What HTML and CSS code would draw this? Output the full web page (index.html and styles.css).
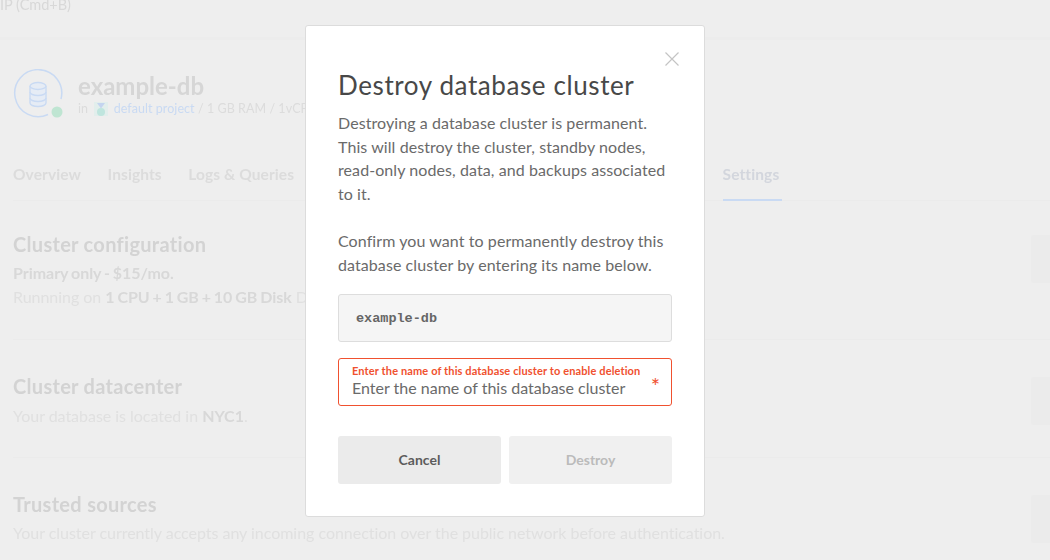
FILE: index.html
```html
<!DOCTYPE html>
<html lang="en">
<head>
<meta charset="utf-8">
<title>Destroy database cluster</title>
<link rel="stylesheet" href="styles.css">
</head>
<body>
<div class="page">
  <div class="hint">IP (Cmd+B)</div>
  <header class="head">
    <div class="db-icon">
      <svg width="50" height="50" viewBox="0 0 50 50" fill="none">
        <path d="M35 45.500A23.500 23.500 0 1 1 48 30" stroke="#c9daf3" stroke-width="1.500"/>
        <g stroke="#c9daf3" stroke-width="1.400" fill="#e6ecf5">
          <path d="M17 17v17c0 2 3.500 3.500 8 3.500s8-1.500 8-3.500V17"/>
          <ellipse cx="25" cy="17" rx="8" ry="3.500"/>
          <path d="M17 23c0 2 3.500 3.500 8 3.500s8-1.500 8-3.500M17 29c0 2 3.500 3.500 8 3.500s8-1.500 8-3.500" fill="none"/>
        </g>
        <circle cx="44" cy="43" r="5.500" fill="#bfe5d2"/>
      </svg>
    </div>
    <div class="head-text">
      <h1 class="db-name">example-db</h1>
      <p class="meta">in
        <svg class="project" width="14" height="14" viewBox="0 0 14 14">
          <rect width="14" height="14" fill="#e2eeec"/>
          <path d="M3 1h8L7 6.500z" fill="#c4d4ef"/>
          <circle cx="7" cy="10" r="4" fill="#bfe5de"/>
        </svg>
        <span class="link">default project</span> / 1 GB RAM / 1vCPU</p>
    </div>
  </header>
  <nav class="tabs">
    <span class="tab">Overview</span>
    <span class="tab">Insights</span>
    <span class="tab">Logs &amp; Queries</span>
    <span class="tab tab-active">Settings</span>
  </nav>
  <section class="row row-config">
    <div>
      <h2 class="row-title">Cluster configuration</h2>
      <p class="row-text"><b>Primary only - $15/mo.</b></p>
      <p class="row-text">Runnning on <b>1 CPU + 1 GB + 10 GB Disk</b> Database</p>
    </div>
    <span class="ghost-btn"></span>
  </section>
  <section class="row row-center">
    <div>
      <h2 class="row-title">Cluster datacenter</h2>
      <p class="row-text">Your database is located in <b>NYC1</b>.</p>
    </div>
    <span class="ghost-btn"></span>
  </section>
  <section class="row row-sources">
    <div>
      <h2 class="row-title">Trusted sources</h2>
      <p class="row-text">Your cluster currently accepts any incoming connection over the public network before authentication.</p>
    </div>
    <span class="ghost-btn"></span>
  </section>
</div>

<div class="overlay">
  <div class="modal" role="dialog">
    <button class="close" aria-label="Close">
      <svg width="14" height="14" viewBox="0 0 14 14"><path d="M.5.5l13 13M13.500.5l-13 13" stroke="#c4c4c4" stroke-width="1.200" fill="none"/></svg>
    </button>
    <h2 class="modal-title">Destroy database cluster</h2>
    <p class="copy">Destroying a database cluster is permanent. This will destroy the cluster, standby nodes, read-only nodes, data, and backups associated to it.</p>
    <p class="copy copy-confirm">Confirm you want to permanently destroy this database cluster by entering its name below.</p>
    <div class="code-box">example-db</div>
    <div class="field">
      <div class="field-body">
        <span class="field-label">Enter the name of this database cluster to enable deletion</span>
        <span class="field-input">Enter the name of this database cluster</span>
      </div>
      <span class="required">*</span>
    </div>
    <div class="actions">
      <button class="btn btn-cancel">Cancel</button>
      <button class="btn btn-destroy">Destroy</button>
    </div>
  </div>
</div>
</body>
</html>
```
FILE: styles.css
```css
* { box-sizing: border-box; }
html, body { margin: 0; height: 560px; overflow: hidden; background: #eeeeee; }
body { font-family: "Lato", "Liberation Sans", sans-serif; position: relative; }

.page { height: 560px; overflow: hidden; filter: blur(0.5px); color: #dedede; }
.hint { height: 40px; padding-top: 1px; font-size: 14.500px; line-height: 8px; color: #d8d8d8; border-bottom: 3px solid #ececec; }

.head { display: flex; gap: 15px; margin: 29px 0 0 13px; height: 54px; }
.db-icon { width: 50px; height: 50px; }
.db-name { margin: 2px 0 0; font-size: 24px; line-height: 30px; font-weight: 700; color: #d6d6d6; }
.meta { margin: 0; font-size: 12.500px; line-height: 16px; letter-spacing: .06px; color: #dcdcdc; white-space: nowrap; }
.project { vertical-align: -3px; margin: 0 2px 0 3px; }
.link { color: #c9daf3; }

.tabs { display: flex; gap: 26.500px; margin: 0 0 0 13px; padding-top: 41px; height: 78px; border-bottom: 1px solid #ebebeb; font-size: 15.500px; line-height: 20px; font-weight: 700; letter-spacing: .1px; color: #dcdcdc; }
.tab { height: 37px; }
.tab-active { margin-left: 402px; width: 59px; border-bottom: 2px solid #c9daf3; color: #d3d6dd; }

.row { display: flex; justify-content: space-between; margin-left: 13px; border-bottom: 1px solid #ebebeb; white-space: nowrap; }
.row-config { height: 139px; padding-top: 33px; }
.row-center { height: 118px; padding-top: 36px; }
.row-sources { height: 110px; padding-top: 36px; border-bottom: 0; }
.row-title { margin: -2px 0 6px; font-size: 20px; line-height: 24px; font-weight: 700; letter-spacing: .3px; color: #d3d3d3; }
.row-text { margin: 0; font-size: 16px; line-height: 24px; letter-spacing: -.03px; color: #e0e0e0; }
.row-config .row-text { position: relative; top: -1px; }
.row-sources .row-title { margin-bottom: 5px; }
.row-text b { color: #d8d8d8; word-spacing: -1px; }
.ghost-btn { width: 40px; height: 48px; margin: 1px -21px 0 0; border-radius: 3px; background: #ebebeb; }

.overlay { position: absolute; inset: 0; padding: 25px 0 0 305px; }
.modal { position: relative; width: 400px; height: 492px; padding: 43px 32px 0 32px; background: #fff; border: 1px solid #dcdcdc; border-radius: 3px; }
.close { position: absolute; top: 26px; right: 25px; width: 14px; height: 14px; padding: 0; border: 0; background: none; display: block; }
.close svg { display: block; }
.modal-title { margin: 0 0 10px; font-size: 26px; line-height: 32px; font-weight: 400; letter-spacing: .6px; color: #484848; }
.copy { margin: 0; font-size: 16px; line-height: 23.500px; letter-spacing: .08px; color: #6a6a6a; }
.copy-confirm { margin-top: 24px; line-height: 24px; }
.code-box { height: 48px; margin-top: 17px; padding-left: 17px; font: 700 13.500px/47px "Liberation Mono", monospace; color: #666; background: #f5f5f5; border: 1px solid #ddd; border-radius: 3px; }
.field { display: flex; justify-content: space-between; height: 48px; margin-top: 16px; padding: 5px 11px 0 13px; border: 1px solid #f0512f; border-radius: 3px; }
.field-body { display: flex; flex-direction: column; }
.field-label { font-size: 11px; line-height: 14px; font-weight: 700; letter-spacing: .13px; color: #f0512f; white-space: nowrap; }
.field-input { font-size: 16px; line-height: 20px; color: #6a6a6a; white-space: nowrap; }
.required { font-size: 22px; line-height: 44px; color: #f0512f; }
.actions { display: grid; grid-template-columns: 1fr 1fr; gap: 8px; margin-top: 30px; }
.btn { height: 48px; padding: 0 0 2px; border: 0; border-radius: 3px; font: 700 14px "Lato", "Liberation Sans", sans-serif; }
.btn-cancel { background: #ebebeb; color: #5c5c5c; }
.btn-destroy { background: #f0f0f0; color: #bbb; }
```
